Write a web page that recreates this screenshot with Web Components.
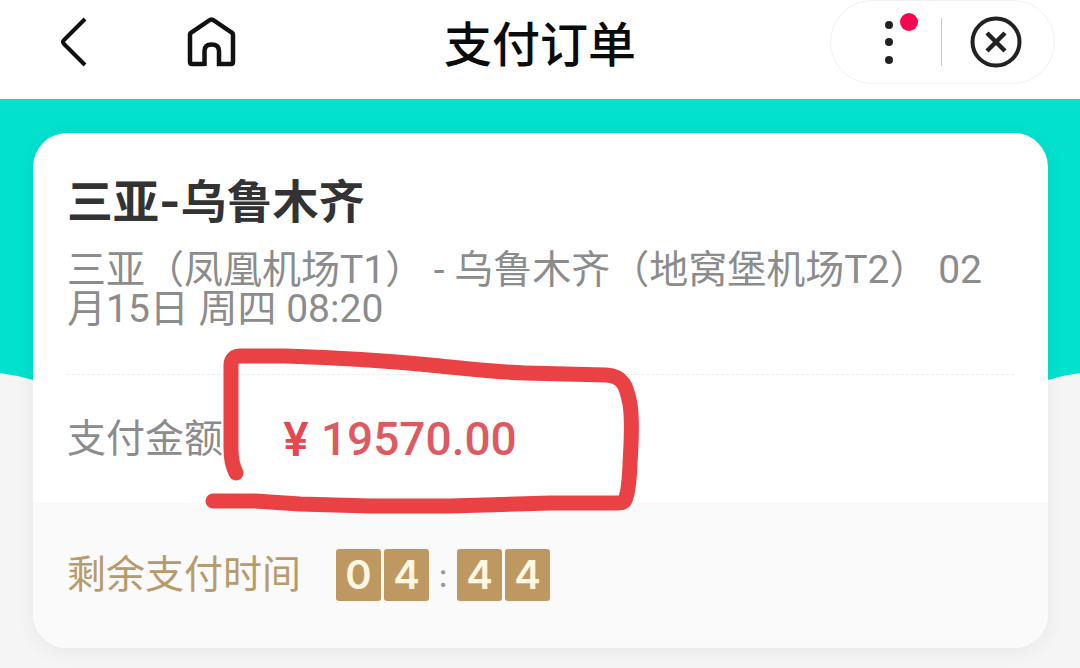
<!DOCTYPE html>
<html lang="zh-CN">
<head>
<meta charset="utf-8">
<meta name="viewport" content="width=device-width, initial-scale=1">
<title>支付订单</title>
<style>
	body {
		margin: 0;
		min-height: 100vh;
		background: #f5f5f5;
		font-family: Roboto, "Noto Sans CJK SC", sans-serif;
		font-size: 39px;
		line-height: 39px;
		color: #8c8c8c;
	}
</style>
</head>
<body>
<pay-page>
	<nav-bar slot="bar">支付订单</nav-bar>
	<order-card>
		<span slot="title">三亚-乌鲁木齐</span>
		<span slot="route">三亚（凤凰机场T1） - 乌鲁木齐（地窝堡机场T2） 02月15日 周四 08:20</span>
		<pay-amount slot="amount" value="19570.00">支付金额</pay-amount>
		<count-down slot="timer" minutes="04" seconds="44">剩余支付时间</count-down>
	</order-card>
</pay-page>

<script>
class PayPage extends HTMLElement {
	constructor() {
		super();
		this.attachShadow({mode: "open"});
	}
	connectedCallback() {
		this.shadowRoot.innerHTML = `
		<style>
		:host {
			display: block;
		}
		main {
			position: relative;
			padding: 34px 32px 20px 33px;
			overflow: hidden;
		}
		.wave {
			position: absolute;
			top: 0;
			left: 0;
			width: 100%;
			height: 296px;
			fill: #02e1ce;
		}
		.content {
			position: relative;
		}
		</style>
		<slot name="bar"></slot>
		<main>
			<svg class="wave" viewBox="0 0 1080 296" preserveAspectRatio="none" aria-hidden="true">
				<path d="M0 0H1080V274Q1064 276 1048 281Q900 296 540 296Q180 296 33 281Q16 276 0 274Z"/>
			</svg>
			<div class="content"><slot></slot></div>
		</main>
		`;
	}
}
customElements.define("pay-page", PayPage);

class NavBar extends HTMLElement {
	constructor() {
		super();
		this.attachShadow({mode: "open"});
	}
	connectedCallback() {
		this.shadowRoot.innerHTML = `
		<style>
		:host {
			display: block;
			background: #fff;
		}
		header {
			display: grid;
			grid-template-columns: 1fr auto 1fr;
			height: 99px;
		}
		button {
			display: block;
			padding: 0;
			border: 0;
			background: none;
			cursor: pointer;
		}
		svg {
			display: block;
			fill: none;
			stroke: #111;
			overflow: visible;
		}
		.left {
			display: flex;
			align-items: center;
			gap: 90px;
			height: 84px;
			padding-left: 54px;
		}
		h1 {
			margin: 0;
			font-size: 48px;
			line-height: 92px;
			font-weight: 500;
			color: #0b0b0b;
		}
		.capsule {
			display: flex;
			align-items: center;
			justify-self: end;
			box-sizing: border-box;
			height: 84px;
			margin-right: 25px;
			border: 1px solid #f1f1f1;
			border-radius: 42px;
		}
		.capsule svg {
			stroke: #222;
		}
		.capsule button + button {
			border-left: 1px solid #ccc;
		}
		</style>
		<header>
			<div class="left">
				<button aria-label="返回">
					<svg width="40" height="56" viewBox="0 0 40 56"><path d="M31 5L10 26Q8 28 10 30L31 51" stroke-width="4"/></svg>
				</button>
				<button aria-label="首页">
					<svg width="56" height="56" viewBox="0 0 56 56"><path d="M20.500 50H8Q6 50 6 48V21Q6 19 8 18L25 6.500Q27.500 4.500 30 6.500L47 18Q49 19 49 21V48Q49 50 47 50H35V37Q35 30.500 27.500 30.500Q20.500 30.500 20.500 37V52" stroke-width="4.500"/></svg>
				</button>
			</div>
			<h1><slot></slot></h1>
			<div class="capsule">
				<button aria-label="更多">
					<svg width="110" height="48" viewBox="0 0 110 48">
						<g fill="#222" stroke="none"><circle cx="58" cy="7" r="4"/><circle cx="58" cy="24" r="4"/><circle cx="58" cy="42" r="4"/></g>
						<circle cx="78" cy="4" r="9" fill="#f5064f" stroke="none"/>
					</svg>
				</button>
				<button aria-label="关闭">
					<svg width="112" height="48" viewBox="0 0 112 48"><circle cx="54" cy="24" r="23.500" stroke-width="4"/><path d="M45 15L63 33M63 15L45 33" stroke-width="4.500"/></svg>
				</button>
			</div>
		</header>
		`;
	}
}
customElements.define("nav-bar", NavBar);

class OrderCard extends HTMLElement {
	constructor() {
		super();
		this.attachShadow({mode: "open"});
	}
	connectedCallback() {
		this.shadowRoot.innerHTML = `
		<style>
		:host {
			display: block;
			border-radius: 34px;
			background: #fff;
			box-shadow: 0 4px 20px rgba(0, 0, 0, .06);
		}
		.info {
			padding: 38px 34px 45px;
		}
		h2 {
			margin: 0 0 20px;
			font-family: Inter, "Noto Sans CJK SC", sans-serif;
			font-size: 46px;
			line-height: 60px;
			font-weight: 700;
			color: #333;
		}
		p {
			margin: 0;
		}
		.amount {
			margin: 0 34px;
			border-top: 1px dashed #eee;
		}
		.timer {
			padding: 46px 34px 47px;
			border-radius: 0 0 34px 34px;
			background: #fafafa;
		}
		</style>
		<section class="info">
			<h2><slot name="title"></slot></h2>
			<p><slot name="route"></slot></p>
		</section>
		<div class="amount"><slot name="amount"></slot></div>
		<div class="timer"><slot name="timer"></slot></div>
		`;
	}
}
customElements.define("order-card", OrderCard);

class PayAmount extends HTMLElement {
	constructor() {
		super();
		this.attachShadow({mode: "open"});
	}
	connectedCallback() {
		this.shadowRoot.innerHTML = `
		<style>
		:host {
			display: flex;
			align-items: center;
			gap: 60px;
			height: 128px;
			position: relative;
		}
		.price {
			display: flex;
			gap: 12px;
			font-size: 46px;
			font-weight: 500;
			color: #dd5a62;
		}
		.unit {
			font-family: Inter, sans-serif;
			font-weight: 600;
			color: #e5494f;
		}
		/* hand-drawn marker round the price */
		.marker {
			position: absolute;
			left: 133px;
			top: -36px;
			fill: none;
			stroke: #ea4244;
			stroke-width: 15;
			stroke-linecap: round;
			stroke-linejoin: round;
			pointer-events: none;
		}
		</style>
		<span><slot></slot></span>
		<span class="price"><span class="unit">¥</span><span>${this.getAttribute("value")}</span></span>
		<svg class="marker" width="450" height="180" viewBox="200 340 450 180" aria-hidden="true">
			<path d="M236 474Q231 464 231 450V366Q231 357 241 357H285C350 359 390 362 430 366C470 370 495 373 525 374L606 376C626 377 627 392 630 405C633 425 631 445 630 465Q629 492 625 501Q624 504 618 504L550 504L450 507H370L300 505L255 502H213"/>
		</svg>
		`;
	}
}
customElements.define("pay-amount", PayAmount);

class CountDown extends HTMLElement {
	constructor() {
		super();
		this.attachShadow({mode: "open"});
	}
	digits(name) {
		return [...this.getAttribute(name)].map(d => `<b>${d}</b>`).join("");
	}
	connectedCallback() {
		this.shadowRoot.innerHTML = `
		<style>
		:host {
			display: flex;
			align-items: center;
			gap: 35px;
			color: #b89b6c;
		}
		.clock {
			display: flex;
			align-items: center;
			gap: 3px;
			font-family: Inter, sans-serif;
		}
		b {
			width: 45px;
			border-radius: 3px;
			background: #bd9961;
			font-size: 40px;
			line-height: 52px;
			font-weight: 600;
			text-align: center;
			color: #fff6e2;
		}
		i {
			width: 22px;
			font-style: normal;
			font-size: 32px;
			text-align: center;
			color: #999;
		}
		</style>
		<span><slot></slot></span>
		<span class="clock">${this.digits("minutes")}<i>:</i>${this.digits("seconds")}</span>
		`;
	}
}
customElements.define("count-down", CountDown);
</script>
</body>
</html>
